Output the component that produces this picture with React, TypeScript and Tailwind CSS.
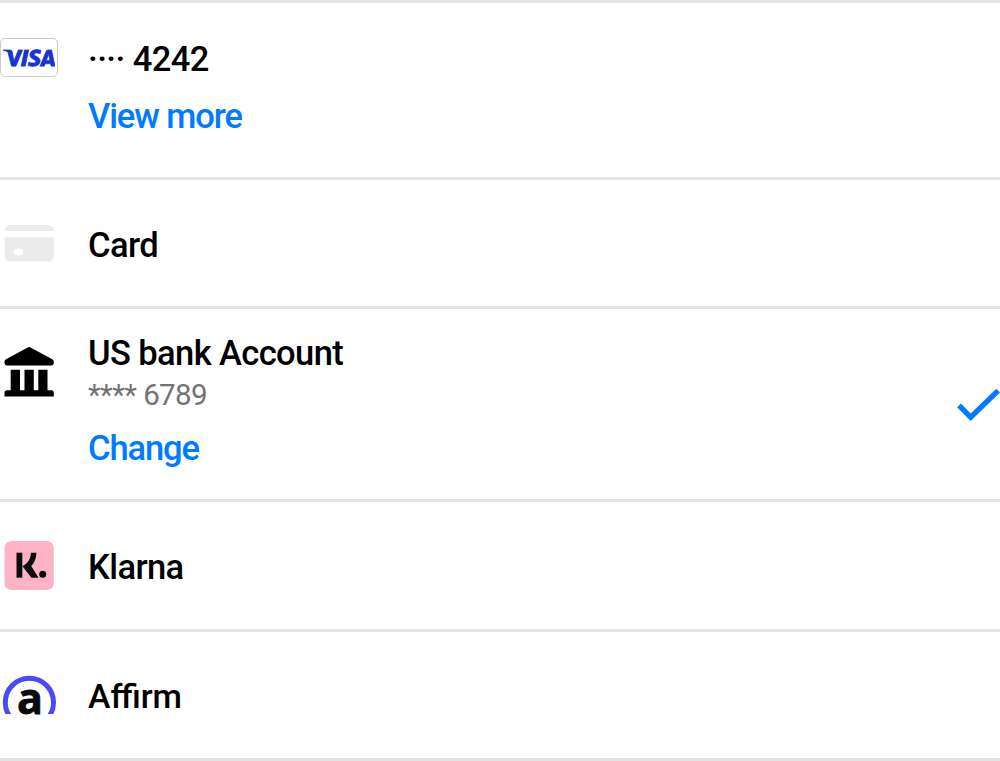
import type { ReactNode } from "react";
import { SiVisa } from "react-icons/si";

const titleBase = "leading-[40px] font-medium text-black whitespace-pre";
const title = `text-[34.5px] tracking-[-0.6px] ${titleBase}`;
const link = "text-[34.5px] tracking-[-1.1px] leading-[40px] font-medium text-[#007aff] whitespace-pre text-left";

function Visa() {
  return (
    <div className="mt-[35px] flex h-[39px] w-[58px] items-center justify-center rounded-[5px] border-[1.5px] border-[#cccccc]">
      <SiVisa className="h-[52px] w-[52px] shrink-0 stroke-[0.3px] text-[#1a35cc]" />
    </div>
  );
}

function CardIcon() {
  return (
    <svg className="mt-[45px] h-[37px] w-[60px]" viewBox="-4.5 0 60 37">
      <path d="M0 6C0.4 2.3 2.8 0 6.5 0H42.8C46.5 0 48.9 2.3 49.3 6Z" fill="#ebebeb" />
      <path d="M0 12.2H49.3V30.2C49.3 34.1 46.8 36.6 42.8 36.6H6.5C2.5 36.6 0 34.1 0 30.2Z" fill="#ebebeb" />
      <rect x="9.2" y="23.8" width="9.5" height="6.6" rx="3.4" fill="#fff" />
    </svg>
  );
}

function Bank() {
  return (
    <svg className="mt-[38px] h-[50px] w-[60px]" viewBox="-4.5 -0.3 60 50">
      <path d="M23.2 .2Q24.6 -.6 26 .2L47.8 12Q49.3 12.8 49.3 14.5V15.5Q49.3 18.2 46.5 18.2H2.8Q0 18.2 0 15.5V14.5Q0 12.8 1.5 12Z" />
      <path d="M6.2 22.5H15.5V43H20V22.5H29.3V43H33.8V22.5H43V43H46.8Q49.3 43 49.3 45.7V49.2H0V45.7Q0 43 2.5 43H6.2Z" />
    </svg>
  );
}

function Klarna() {
  return (
    <svg className="mt-[39px] h-[49px] w-[60px]" viewBox="-4.5 0 60 49">
      <rect width="49.3" height="49" rx="7" fill="#ffb3c7" />
      <g fill="#0b0b0b">
        <rect x="12" y="11.7" width="5.8" height="25" />
        <path d="M26.3 11.7H31.9C31.9 17.5 29.9 21.8 26.7 24.9L34 36.7H26.9L18 25.2C23.3 22.2 26.3 17.8 26.3 11.7Z" />
        <circle cx="38.2" cy="33.3" r="3.5" />
      </g>
    </svg>
  );
}

function Affirm() {
  return (
    <svg className="mt-[23px] h-[80px] w-[60px]" viewBox="0 -20 60 80">
      <clipPath id="arc">
        <rect width="60" height="39" />
      </clipPath>
      <circle cx="29.4" cy="27.4" r="24.1" clipPath="url(#arc)" fill="none" stroke="#4a4af4" strokeWidth="5" />
      <text x="17" y="38.9" fontFamily="Open Sans" fontWeight="700" fontSize="43" fill="#0a0a0a" stroke="#0a0a0a" strokeWidth="0.8">a</text>
    </svg>
  );
}

function Row({ icon, height, children }: { icon: ReactNode; height: string; children: ReactNode }) {
  return (
    <li className={`flex border-t-[3px] border-[#e3e3e3] ${height}`}>
      <div className="w-[88px] shrink-0">{icon}</div>
      {children}
    </li>
  );
}

export default function App() {
  return (
    <ul className="h-[761px] w-full overflow-hidden border-b-[3px] border-[#e3e3e3] bg-white font-['Roboto',sans-serif]">
      <Row height="h-[177px]" icon={<Visa />}>
        <div className="flex flex-col items-start pt-[36px]">
          <span className={title}>···· 4242</span>
          <button className={`mt-[17px] ${link}`}>View more</button>
        </div>
      </Row>
      <Row height="h-[129px]" icon={<CardIcon />}>
        <span className={`mt-[45px] ${title}`}>Card</span>
      </Row>
      <Row height="h-[193px]" icon={<Bank />}>
        <div className="flex flex-1 flex-col items-start pt-[24px]">
          <span className={title}>US bank Account</span>
          <span className="mt-[5px] text-[29.5px] leading-[34px] tracking-[-0.6px] text-[#737373]">**** 6789</span>
          <button className={`mt-[16px] ${link}`}>Change</button>
        </div>
        <svg className="mt-[79px] h-[34px] w-[43px]" viewBox="0 0 43 34" fill="none">
          <path d="M2 17.4L13.7 29.3L41.2 2.6" stroke="#007aff" strokeWidth="5.4" />
        </svg>
      </Row>
      <Row height="h-[130px]" icon={<Klarna />}>
        <span className={`mt-[45px] ${title}`}>Klarna</span>
      </Row>
      <Row height="h-[129px]" icon={<Affirm />}>
        <span className={`mt-[45px] text-[33.8px] ${titleBase}`}>Affirm</span>
      </Row>
    </ul>
  );
}
